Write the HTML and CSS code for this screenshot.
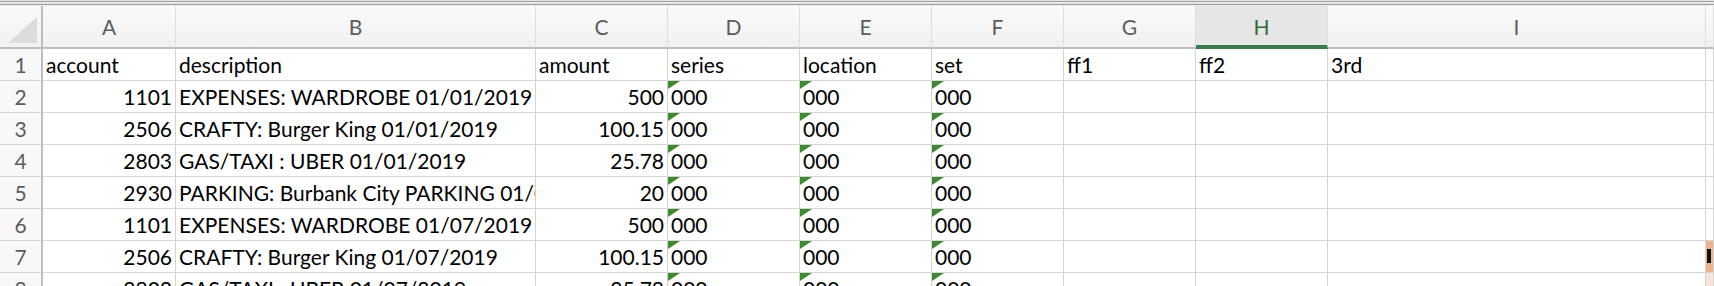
FILE: index.html
```html
<!DOCTYPE html>
<html lang="en">
<head>
  <meta charset="UTF-8" />
  <title>Sheet1</title>
  <link rel="stylesheet" href="styles.css">
</head>
<body>
  <div class="topbar"></div>
  <div class="sheet">
    <!-- column headers -->
    <div class="corner"><span class="select-all"></span></div>
    <div class="colhead">A</div>
    <div class="colhead">B</div>
    <div class="colhead">C</div>
    <div class="colhead">D</div>
    <div class="colhead">E</div>
    <div class="colhead">F</div>
    <div class="colhead">G</div>
    <div class="colhead active">H</div>
    <div class="colhead">I</div>
    <div class="colhead"></div>

    <!-- row 1 -->
    <div class="rowhead">1</div>
    <div class="cell">account</div>
    <div class="cell">description</div>
    <div class="cell">amount</div>
    <div class="cell">series</div>
    <div class="cell">location</div>
    <div class="cell">set</div>
    <div class="cell">ff1</div>
    <div class="cell">ff2</div>
    <div class="cell">3rd</div>
    <div class="cell"></div>

    <!-- row 2 -->
    <div class="rowhead">2</div>
    <div class="cell num">1101</div>
    <div class="cell">EXPENSES: WARDROBE 01/01/2019</div>
    <div class="cell num">500</div>
    <div class="cell txt">000</div>
    <div class="cell txt">000</div>
    <div class="cell txt">000</div>
    <div class="cell"></div>
    <div class="cell"></div>
    <div class="cell"></div>
    <div class="cell"></div>

    <!-- row 3 -->
    <div class="rowhead">3</div>
    <div class="cell num">2506</div>
    <div class="cell">CRAFTY: Burger King 01/01/2019</div>
    <div class="cell num">100.15</div>
    <div class="cell txt">000</div>
    <div class="cell txt">000</div>
    <div class="cell txt">000</div>
    <div class="cell"></div>
    <div class="cell"></div>
    <div class="cell"></div>
    <div class="cell"></div>

    <!-- row 4 -->
    <div class="rowhead">4</div>
    <div class="cell num">2803</div>
    <div class="cell">GAS/TAXI : UBER 01/01/2019</div>
    <div class="cell num">25.78</div>
    <div class="cell txt">000</div>
    <div class="cell txt">000</div>
    <div class="cell txt">000</div>
    <div class="cell"></div>
    <div class="cell"></div>
    <div class="cell"></div>
    <div class="cell"></div>

    <!-- row 5 -->
    <div class="rowhead">5</div>
    <div class="cell num">2930</div>
    <div class="cell">PARKING: Burbank City PARKING 01/01/2019</div>
    <div class="cell num">20</div>
    <div class="cell txt">000</div>
    <div class="cell txt">000</div>
    <div class="cell txt">000</div>
    <div class="cell"></div>
    <div class="cell"></div>
    <div class="cell"></div>
    <div class="cell"></div>

    <!-- row 6 -->
    <div class="rowhead">6</div>
    <div class="cell num">1101</div>
    <div class="cell">EXPENSES: WARDROBE 01/07/2019</div>
    <div class="cell num">500</div>
    <div class="cell txt">000</div>
    <div class="cell txt">000</div>
    <div class="cell txt">000</div>
    <div class="cell"></div>
    <div class="cell"></div>
    <div class="cell"></div>
    <div class="cell"></div>

    <!-- row 7 -->
    <div class="rowhead">7</div>
    <div class="cell num">2506</div>
    <div class="cell">CRAFTY: Burger King 01/07/2019</div>
    <div class="cell num">100.15</div>
    <div class="cell txt">000</div>
    <div class="cell txt">000</div>
    <div class="cell txt">000</div>
    <div class="cell"></div>
    <div class="cell"></div>
    <div class="cell"></div>
    <div class="cell marked"><span class="mark"></span></div>

    <!-- row 8 -->
    <div class="rowhead">8</div>
    <div class="cell num">2803</div>
    <div class="cell">GAS/TAXI : UBER 01/07/2019</div>
    <div class="cell num">25.78</div>
    <div class="cell txt">000</div>
    <div class="cell txt">000</div>
    <div class="cell txt">000</div>
    <div class="cell"></div>
    <div class="cell"></div>
    <div class="cell"></div>
    <div class="cell tinted"></div>
  </div>
</body>
</html>
```

FILE: styles.css
```css
html, body {
  margin: 0;
  padding: 0;
  background: #fff;
  overflow: hidden;
}
body {
  font-family: Lato, "Liberation Sans", sans-serif;
  font-size: 21px;
  color: #000;
}
.topbar {
  height: 6px;
  background: linear-gradient(to bottom,
    #e2e2e2 0, #e2e2e2 1px,
    #a8a8a8 1px, #a8a8a8 2px,
    #e6e6e6 2px, #e6e6e6 4px,
    #9e9e9e 4px, #9e9e9e 5px,
    #ececec 5px);
}
.sheet {
  display: grid;
  grid-template-columns: 43px 133px 360px 132px 132px 132px 132px 132px 132px 378px 1fr;
  grid-template-rows: 43px;
  grid-auto-rows: 32px;
}
.sheet > div {
  box-sizing: border-box;
  border-right: 1px solid #d4d4d4;
  border-bottom: 1px solid #d4d4d4;
  white-space: nowrap;
  overflow: hidden;
  line-height: 31px;
}
.sheet > .corner,
.sheet > .colhead {
  height: 43px;
  line-height: 41px;
  background: linear-gradient(to bottom, #fafafa, #f1f1f1);
  border-bottom: 2px solid #bdbdbd;
}
.sheet > .corner {
  position: relative;
  border-right: 2px solid #bdbdbd;
}
.select-all {
  position: absolute;
  left: 8px;
  top: 11px;
  width: 29px;
  height: 26px;
  background: #dcdcdc;
  clip-path: polygon(100% 0, 100% 100%, 0 100%);
}
.sheet > .colhead {
  text-align: center;
  color: #5c5c5c;
  border-right-color: #dedede;
}
.sheet > .colhead.active {
  background: #e6e6e6;
  color: #2c6e3f;
  border-bottom: 4px solid #3a7a4c;
}
.sheet > .rowhead {
  text-align: center;
  color: #5c5c5c;
  background: #f8f8f8;
  border-right: 2px solid #bdbdbd;
}
.cell {
  padding: 0 4px 0 3px;
}
.cell.num {
  text-align: right;
  padding: 0 3px 0 4px;
}
.cell.txt {
  position: relative;
  padding-left: 3px;
}
.cell.txt::before {
  content: "";
  position: absolute;
  left: 0;
  top: 0;
  width: 12px;
  height: 8px;
  background: #3c8a2e;
  clip-path: polygon(0 0, 100% 0, 0 100%);
}
.cell.marked {
  position: relative;
  background: #ebb48e;
}
.mark {
  position: absolute;
  left: 1px;
  top: 8px;
  width: 4px;
  height: 14px;
  background: #111;
}
.cell.tinted {
  background: #f9e5d8;
}
```
